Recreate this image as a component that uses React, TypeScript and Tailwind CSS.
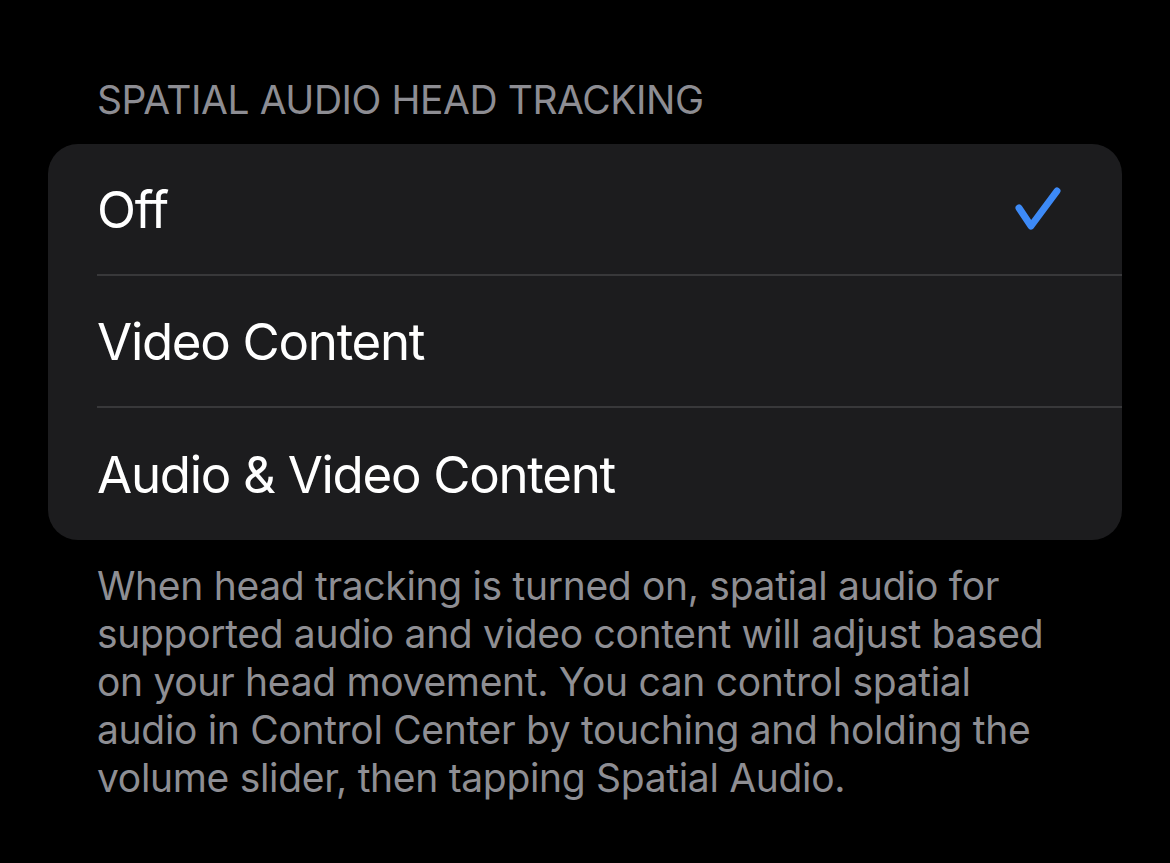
import React from "react";

function Check() {
  return (
    <svg width="48" height="48" viewBox="0 0 48 48" fill="none">
      <path d="M5 23 L17 41 L43 6" stroke="#3d8af7" strokeWidth="7" strokeLinecap="round" strokeLinejoin="round" />
    </svg>
  );
}

export default function App() {
  const rows = ["Off", "Video Content", "Audio & Video Content"];
  return (
    <div className="w-[1170px] h-[863px] bg-black overflow-hidden" style={{ fontFamily: "Inter, 'Noto Sans', sans-serif" }}>
      <div className="pt-[80px] px-[97px] text-[39px] leading-[40px] text-[#8d8d93] tracking-[-0.45px]">SPATIAL AUDIO HEAD TRACKING</div>
      <div className="mt-[24px] mx-[48px] bg-[#1c1c1e] rounded-[30px] overflow-hidden">
        {rows.map((r, i) => (
          <div key={r} className="pl-[49px] flex">
            <div className={"flex-1 h-[132px] flex items-center justify-between pr-[60px] " + (i < 2 ? "border-b-[2px] border-[#38383a]" : "")}>
              <span className="text-white text-[51px] leading-none tracking-[-1.3px]">{r}</span>
              {i === 0 && <Check />}
            </div>
          </div>
        ))}
      </div>
      <div className="mt-[22px] pl-[97px] text-[39px] leading-[48px] text-[#8e8e93] tracking-[-0.32px] whitespace-nowrap">
        When head tracking is turned on, spatial audio for<br />
        supported audio and video content will adjust based<br />
        on your head movement. You can control spatial<br />
        audio in Control Center by touching and holding the<br />
        volume slider, then tapping Spatial Audio.
      </div>
    </div>
  );
}
